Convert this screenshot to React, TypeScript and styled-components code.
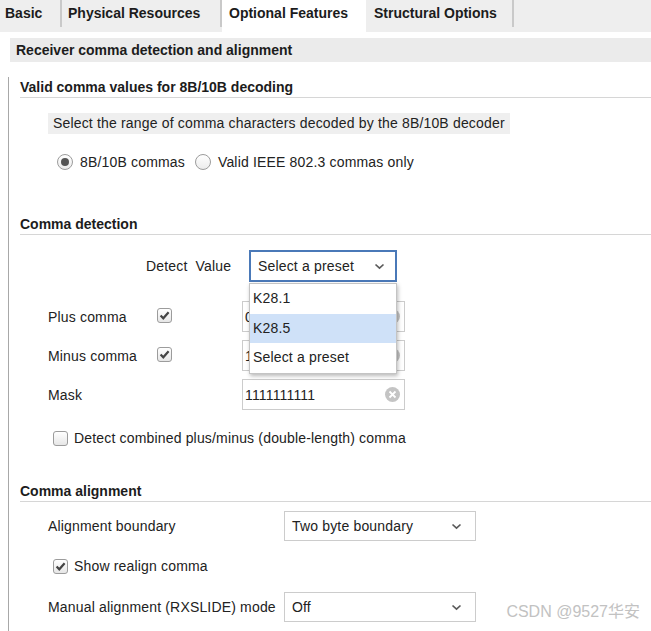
import React from "react";
import styled, { createGlobalStyle } from "styled-components";

const GlobalStyle = createGlobalStyle`
  html, body {
    margin: 0;
    padding: 0;
    background: #ffffff;
    overflow: hidden;
  }
  body {
    font-family: "Liberation Sans", Arial, "Noto Sans CJK SC", sans-serif;
    font-size: 14px;
    letter-spacing: 0.17px;
    color: #1e1e1e;
  }
  * { box-sizing: border-box; }
`;

const Root = styled.div`
  position: relative;
  width: 651px;
  height: 631px;
  overflow: hidden;
  background: #fff;
`;

const TabBar = styled.div`
  display: flex;
  align-items: flex-start;
  height: 32px;
  background: #eeeeee;
`;

const Tab = styled.div<{ $active?: boolean; $w: number; $pl: number }>`
  width: ${(p) => p.$w}px;
  height: ${(p) => (p.$active ? "32px" : "27px")};
  line-height: 27px;
  padding-left: ${(p) => p.$pl}px;
  font-weight: bold;
  font-size: 14px;
  letter-spacing: 0;
  color: #1c1c1c;
  background: ${(p) => (p.$active ? "#ffffff" : "transparent")};
  border-right: 2px solid ${(p) => (p.$active ? "transparent" : "#c9c9c9")};
  white-space: nowrap;
`;

const Page = styled.div`
  padding: 6px 0 0 8px;
`;

const GroupHeader = styled.div`
  margin-left: 2px;
  height: 24px;
  line-height: 24px;
  padding-left: 6px;
  background: #ebebeb;
  font-weight: bold;
  letter-spacing: 0;
  color: #1c1c1c;
`;

const Panel = styled.div`
  border-left: 1px solid #a8a8a8;
  padding-left: 11px;
  height: 600px;
`;

const SectionTitle = styled.div<{ $mt: number }>`
  margin-top: ${(p) => p.$mt}px;
  height: 21px;
  line-height: 21px;
  font-weight: bold;
  letter-spacing: 0;
  color: #1c1c1c;
  border-bottom: 1px solid #d6d6d6;
`;

const InfoBand = styled.div`
  margin: 15px 0 0 28px;
  width: fit-content;
  height: 21px;
  line-height: 21px;
  padding: 0 5px;
  background: #efefef;
  color: #222;
`;

const RadioRow = styled.div`
  margin: 18px 0 0 37px;
  height: 20px;
  display: flex;
  align-items: center;
`;

const RadioItem = styled.label`
  display: flex;
  align-items: center;
  gap: 7px;
  margin-right: 10px;
  color: #222;
`;

const RadioCircle = styled.span<{ $checked?: boolean }>`
  position: relative;
  width: 16px;
  height: 16px;
  border-radius: 50%;
  border: 1px solid #9c9c9c;
  background: linear-gradient(#ffffff, #ececec);
  &::after {
    content: "";
    display: ${(p) => (p.$checked ? "block" : "none")};
    position: absolute;
    left: 3px;
    top: 3px;
    width: 8px;
    height: 8px;
    border-radius: 50%;
    background: #555;
  }
`;

const DetectRow = styled.div`
  margin-top: 15px;
  padding-left: 126px;
  display: flex;
  align-items: center;
  gap: 17px;
  height: 32px;
`;

const DetectLabel = styled.span`
  white-space: pre;
  width: 86px;
  color: #222;
`;

const SelectWrap = styled.div`
  position: relative;
`;

const SelectBox = styled.div<{ $focused?: boolean; $width: number; $height: number }>`
  width: ${(p) => p.$width}px;
  height: ${(p) => p.$height}px;
  border: ${(p) => (p.$focused ? "2px solid #4a79b8" : "1px solid #cccccc")};
  background: #fff;
  display: flex;
  align-items: center;
  justify-content: space-between;
  padding: 0 ${(p) => (p.$focused ? "10px" : "13px")} 0 7px;
  color: #222;
`;

const DropList = styled.div`
  position: absolute;
  left: 0;
  top: 33px;
  width: 148px;
  background: #fff;
  border: 1px solid #c4c4c4;
  box-shadow: 1px 2px 4px rgba(0, 0, 0, 0.28);
  z-index: 5;
`;

const DropOption = styled.div<{ $selected?: boolean }>`
  height: 29.5px;
  line-height: 28px;
  padding-left: 3px;
  background: ${(p) => (p.$selected ? "#cfe1f8" : "#fff")};
  color: #222;
`;

const FieldGrid = styled.div`
  margin: 19px 0 0 28px;
  display: grid;
  grid-template-columns: 109px 85px 163px;
  grid-auto-rows: 31px;
  row-gap: 8px;
  align-items: center;
`;

const FieldLabel = styled.span`
  color: #222;
`;

const CheckBox = styled.span<{ $checked?: boolean }>`
  position: relative;
  display: inline-block;
  width: 15px;
  height: 15px;
  border: 1px solid #9c9c9c;
  border-radius: 3px;
  background: linear-gradient(#ffffff, #e6e6e6);
  flex: none;
  svg {
    position: absolute;
    left: 1px;
    top: 1px;
    display: ${(p) => (p.$checked ? "block" : "none")};
  }
`;

const TextInput = styled.div`
  height: 31px;
  border: 1px solid #cccccc;
  background: #fff;
  display: flex;
  align-items: center;
  justify-content: space-between;
  padding: 0 4px 0 2px;
  color: #222;
`;

const ClearIcon = styled.span`
  position: relative;
  width: 15px;
  height: 15px;
  border-radius: 50%;
  background: #c4c4c4;
  svg {
    position: absolute;
    left: 3px;
    top: 3px;
  }
`;

const CheckRow = styled.label<{ $mt: number }>`
  margin: ${(p) => p.$mt}px 0 0 33px;
  height: 20px;
  display: flex;
  align-items: center;
  gap: 6px;
  color: #222;
`;

const AlignRow = styled.div<{ $mt: number }>`
  margin: ${(p) => p.$mt}px 0 0 28px;
  display: flex;
  align-items: center;
  height: 30px;
`;

const AlignLabel = styled.span`
  width: 236px;
  color: #222;
  white-space: nowrap;
`;

const Watermark = styled.div`
  position: absolute;
  right: 11px;
  bottom: 9px;
  font-family: "Liberation Sans", Arial, "Noto Sans CJK SC", sans-serif;
  font-size: 16px;
  letter-spacing: 0;
  color: #c2c2c2;
  white-space: nowrap;
`;

const Chevron = () => (
  <svg width="11" height="7" viewBox="0 0 11 7">
    <polyline points="1.5,1.5 5.5,5.2 9.5,1.5" fill="none" stroke="#5a5a5a" strokeWidth="1.7" />
  </svg>
);

const Tick = () => (
  <svg width="11" height="11" viewBox="0 0 11 11">
    <polyline points="1.6,5.4 4.3,8.3 9.6,2.2" fill="none" stroke="#444" strokeWidth="2.2" />
  </svg>
);

const Clear = () => (
  <ClearIcon>
    <svg width="9" height="9" viewBox="0 0 9 9">
      <path d="M1.5 1.5 L7.5 7.5 M7.5 1.5 L1.5 7.5" stroke="#fff" strokeWidth="1.8" />
    </svg>
  </ClearIcon>
);

const Check = ({ checked }: { checked?: boolean }) => (
  <CheckBox $checked={checked}>
    <Tick />
  </CheckBox>
);

export default function App() {
  return (
    <Root>
      <GlobalStyle />
      <TabBar>
        <Tab $w={62} $pl={5}>Basic</Tab>
        <Tab $w={160} $pl={6}>Physical Resources</Tab>
        <Tab $active $w={144} $pl={7}>Optional Features</Tab>
        <Tab $w={148} $pl={8}>Structural Options</Tab>
      </TabBar>
      <Page>
        <GroupHeader>Receiver comma detection and alignment</GroupHeader>
        <Panel>
          <SectionTitle $mt={15}>Valid comma values for 8B/10B decoding</SectionTitle>
          <InfoBand>Select the range of comma characters decoded by the 8B/10B decoder</InfoBand>
          <RadioRow>
            <RadioItem>
              <RadioCircle $checked />
              8B/10B commas
            </RadioItem>
            <RadioItem>
              <RadioCircle />
              Valid IEEE 802.3 commas only
            </RadioItem>
          </RadioRow>

          <SectionTitle $mt={42}>Comma detection</SectionTitle>
          <DetectRow>
            <DetectLabel>Detect  Value</DetectLabel>
            <SelectWrap>
              <SelectBox $focused $width={148} $height={32}>
                <span>Select a preset</span>
                <Chevron />
              </SelectBox>
              <DropList>
                <DropOption>K28.1</DropOption>
                <DropOption $selected>K28.5</DropOption>
                <DropOption>Select a preset</DropOption>
              </DropList>
            </SelectWrap>
          </DetectRow>
          <FieldGrid>
            <FieldLabel>Plus comma</FieldLabel>
            <span>
              <Check checked />
            </span>
            <TextInput>
              <span>0101111100</span>
              <Clear />
            </TextInput>
            <FieldLabel>Minus comma</FieldLabel>
            <span>
              <Check checked />
            </span>
            <TextInput>
              <span>1010000011</span>
              <Clear />
            </TextInput>
            <FieldLabel>Mask</FieldLabel>
            <span />
            <TextInput>
              <span>1111111111</span>
              <Clear />
            </TextInput>
          </FieldGrid>
          <CheckRow $mt={18}>
            <Check />
            Detect combined plus/minus (double-length) comma
          </CheckRow>

          <SectionTitle $mt={33}>Comma alignment</SectionTitle>
          <AlignRow $mt={9}>
            <AlignLabel>Alignment boundary</AlignLabel>
            <SelectBox $width={192} $height={30}>
              <span>Two byte boundary</span>
              <Chevron />
            </SelectBox>
          </AlignRow>
          <CheckRow $mt={15}>
            <Check checked />
            Show realign comma
          </CheckRow>
          <AlignRow $mt={16}>
            <AlignLabel>Manual alignment (RXSLIDE) mode</AlignLabel>
            <SelectBox $width={192} $height={30}>
              <span>Off</span>
              <Chevron />
            </SelectBox>
          </AlignRow>
        </Panel>
      </Page>
      <Watermark>CSDN @9527华安</Watermark>
    </Root>
  );
}
